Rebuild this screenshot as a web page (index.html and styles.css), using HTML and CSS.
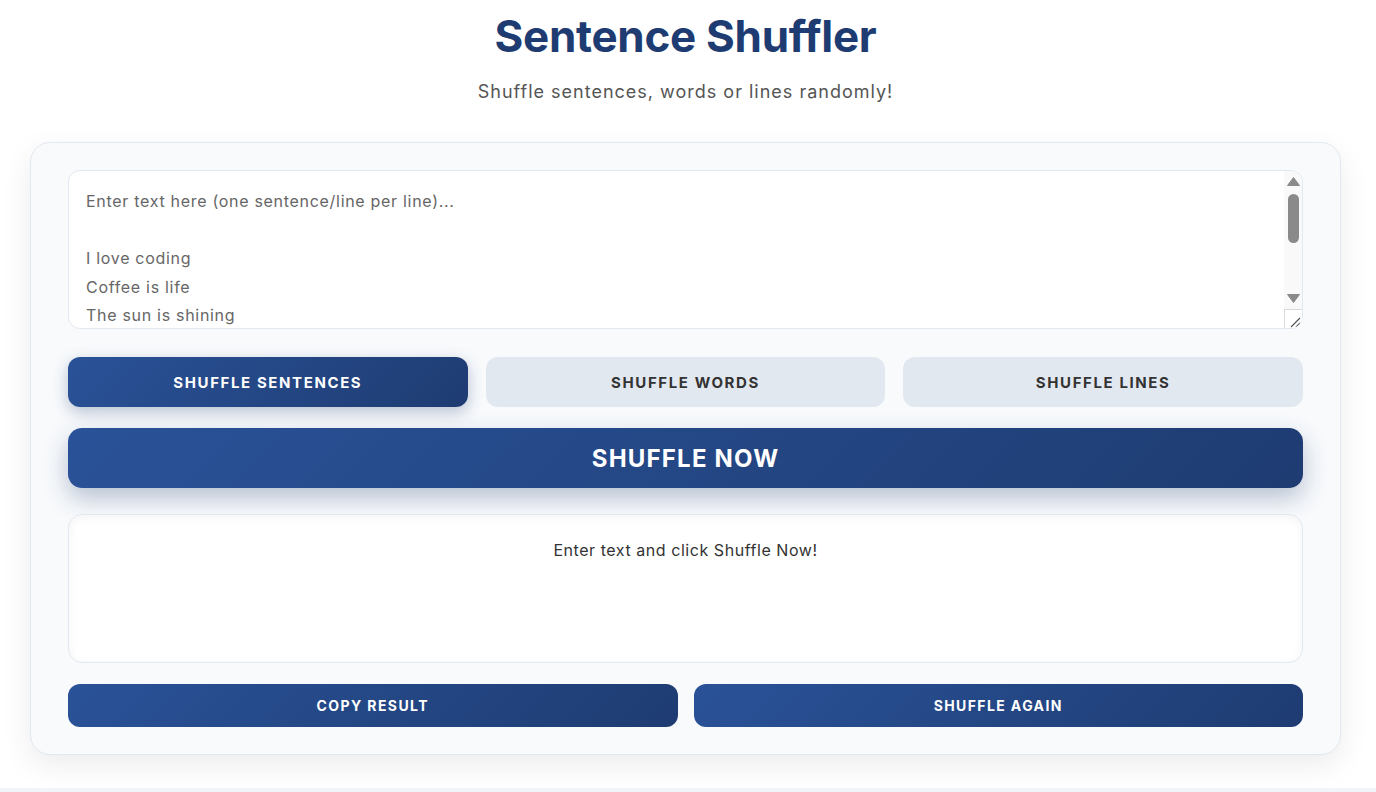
FILE: index.html
```html
<!DOCTYPE html>
<html lang="en">
<head>
<meta charset="utf-8">
<title>Sentence Shuffler</title>
<link rel="stylesheet" href="styles.css">
</head>
<body>
<div class="page">
  <header class="header">
    <h1 class="title">Sentence Shuffler</h1>
    <p class="subtitle">Shuffle sentences, words or lines randomly!</p>
  </header>
  <main class="card">
    <div class="input-wrap">
      <textarea class="input" spellcheck="false">Enter text here (one sentence/line per line)...

I love coding
Coffee is life
The sun is shining
Music makes me happy
Cats are awesome
Pizza is delicious
Reading is fun
Stay curious</textarea>
      <div class="scrollbar" aria-hidden="true">
        <div class="sb-button sb-up">
          <svg width="13" height="9" viewBox="0 0 13 9"><path d="M6.5 0.5 L12.5 8.5 L0.5 8.5 Z" fill="#8a8a8a" stroke="#8a8a8a" stroke-linejoin="round"/></svg>
        </div>
        <div class="sb-track"><div class="sb-thumb"></div></div>
        <div class="sb-button sb-down">
          <svg width="13" height="9" viewBox="0 0 13 9"><path d="M0.5 0.5 L12.5 0.5 L6.5 8.5 Z" fill="#8a8a8a" stroke="#8a8a8a" stroke-linejoin="round"/></svg>
        </div>
        <div class="sb-corner">
          <svg width="18" height="18" viewBox="0 0 18 18"><path d="M6 17 L15 8 M11 17 L15 13" stroke="#555" stroke-width="1.2" fill="none"/></svg>
        </div>
      </div>
    </div>
    <div class="modes">
      <button class="mode active">Shuffle Sentences</button>
      <button class="mode">Shuffle Words</button>
      <button class="mode">Shuffle Lines</button>
    </div>
    <button class="shuffle-now">Shuffle Now</button>
    <div class="output">Enter text and click Shuffle Now!</div>
    <div class="actions">
      <button class="action">Copy Result</button>
      <button class="action">Shuffle Again</button>
    </div>
  </main>
</div>
</body>
</html>
```
FILE: styles.css
```css
html {
  background: #f1f4f8;
}
body {
  margin: 0;
  font-family: Inter, "Open Sans", sans-serif;
}
.page {
  background: #ffffff;
  padding: 0 35px 33px 30px;
}
.header {
  text-align: center;
  padding-top: 10px;
}
.title {
  margin: 0;
  font-size: 44px;
  font-weight: 700;
  color: #1e3c72;
  line-height: 52px;
  letter-spacing: -0.3px;
}
.subtitle {
  margin: 17px 0 0;
  font-size: 18px;
  color: #555;
  line-height: 26px;
  letter-spacing: 1px;
}
.card {
  margin-top: 37px;
  background: #f8fafc;
  border: 1px solid #e2e8f0;
  border-radius: 20px;
  padding: 27px 37px;
  box-shadow: 0 10px 30px rgba(0, 0, 0, 0.08);
  display: flex;
  flex-direction: column;
}
.input-wrap {
  position: relative;
}
.input {
  display: block;
  box-sizing: border-box;
  width: 100%;
  height: 159px;
  border: 1px solid #e2e8f0;
  border-radius: 12px;
  background: #fff;
  padding: 16px 36px 16px 17px;
  font-family: inherit;
  font-size: 16px;
  line-height: 28.5px;
  letter-spacing: 0.7px;
  color: #666;
  resize: none;
  outline: none;
  overflow: hidden;
}
.scrollbar {
  position: absolute;
  top: 1px;
  right: 1px;
  bottom: 1px;
  width: 18px;
  display: flex;
  flex-direction: column;
  background: #f9f9f9;
  border-top-right-radius: 11px;
  border-bottom-right-radius: 11px;
  overflow: hidden;
}
.sb-button {
  height: 19px;
  display: flex;
  justify-content: center;
}
.sb-up {
  align-items: flex-start;
  padding-top: 6px;
  box-sizing: border-box;
}
.sb-down {
  align-items: flex-start;
  padding-top: 4px;
  box-sizing: border-box;
}
.sb-track {
  flex: 1;
  padding: 4px 3px 0 4px;
}
.sb-thumb {
  height: 49px;
  border-radius: 6px;
  background: #8a8a8a;
}
.sb-corner {
  height: 19px;
  box-sizing: border-box;
  background: #fff;
  border-top: 1px solid #d9d9d9;
  border-left: 1px solid #d9d9d9;
}
.sb-corner svg {
  display: block;
}
.modes {
  display: grid;
  grid-template-columns: 1fr 1fr 1fr;
  gap: 18px;
  margin-top: 28px;
}
.mode {
  height: 50px;
  border: none;
  border-radius: 12px;
  background: #e2e8f0;
  color: #333;
  font-family: inherit;
  font-size: 15px;
  font-weight: 700;
  letter-spacing: 1.6px;
  text-transform: uppercase;
}
.mode.active {
  background: linear-gradient(135deg, #2a5298, #1e3c72);
  color: #fff;
  box-shadow: 0 5px 15px rgba(30, 60, 114, 0.3);
}
.shuffle-now {
  margin-top: 21px;
  height: 60px;
  border: none;
  border-radius: 14px;
  background: linear-gradient(135deg, #2a5298, #1e3c72);
  color: #fff;
  font-family: inherit;
  font-size: 24px;
  font-weight: 700;
  letter-spacing: 1.2px;
  text-transform: uppercase;
  box-shadow: 0 10px 25px rgba(30, 60, 114, 0.3);
}
.output {
  margin-top: 26px;
  box-sizing: border-box;
  height: 149px;
  background: #fff;
  border: 1px solid #e2e8f0;
  border-radius: 14px;
  padding: 23px 20px;
  text-align: center;
  font-size: 16px;
  line-height: 24px;
  letter-spacing: 0.55px;
  color: #333;
  box-shadow: inset 0 2px 10px rgba(0, 0, 0, 0.05);
}
.actions {
  display: grid;
  grid-template-columns: 1fr 1fr;
  gap: 16px;
  margin-top: 21px;
}
.action {
  height: 43px;
  border: none;
  border-radius: 12px;
  background: linear-gradient(135deg, #2a5298, #1e3c72);
  color: #fff;
  font-family: inherit;
  font-size: 14px;
  font-weight: 700;
  letter-spacing: 1.4px;
  text-transform: uppercase;
}
```
